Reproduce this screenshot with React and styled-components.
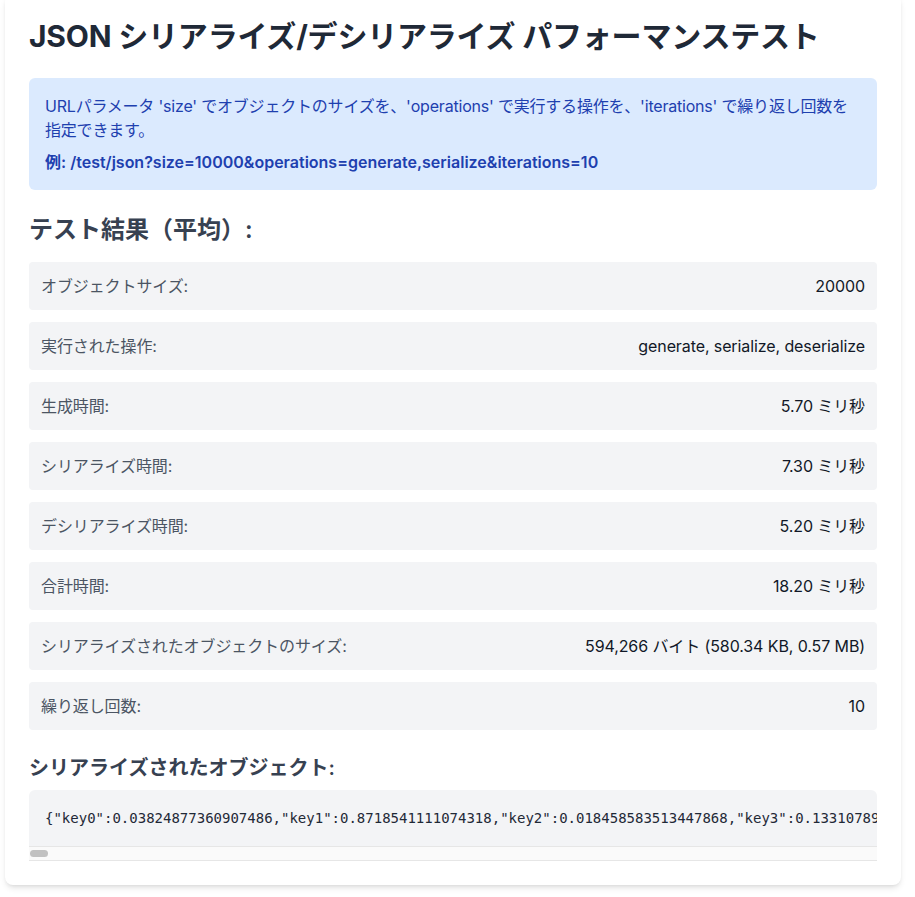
import React from "react";
import styled, { createGlobalStyle } from "styled-components";

const GlobalStyle = createGlobalStyle`
  html, body {
    margin: 0;
    padding: 0;
    background: #ffffff;
  }
  body {
    font-family: Inter, "Noto Sans CJK JP", sans-serif;
    color: #111827;
    line-height: 1.5;
  }
`;

const Page = styled.div`
  width: 915px;
  height: 897px;
  overflow: hidden;
  padding: 0 14px 0 5px;
  box-sizing: border-box;
`;

const Card = styled.div`
  max-width: 896px;
  margin-top: -6px;
  padding: 24px;
  box-sizing: border-box;
  background: #fff;
  border-radius: 8px;
  box-shadow: 0 4px 6px -1px rgba(0, 0, 0, 0.1), 0 2px 4px -2px rgba(0, 0, 0, 0.1);
`;

const Title = styled.h1`
  margin: 0 0 24px;
  font-size: 30px;
  line-height: 36px;
  font-weight: 700;
  letter-spacing: -0.2px;
  color: #1f2937;
`;

const InfoBox = styled.div`
  background: #dbeafe;
  color: #1e40af;
  border-radius: 6px;
  padding: 16px;
  margin-bottom: 24px;
`;

const InfoText = styled.p`
  margin: 0;
  font-size: 16px;
  line-height: 24px;
  letter-spacing: ${(p) => (p.$bold ? "0" : "-0.2px")};
  font-weight: ${(p) => (p.$bold ? 600 : 400)};
  margin-top: ${(p) => (p.$bold ? "8px" : "0")};
`;

const SectionTitle = styled.h2`
  margin: ${(p) => (p.$small ? "24px 0 8px" : "0 0 16px")};
  font-size: ${(p) => (p.$small ? "20px" : "24px")};
  line-height: ${(p) => (p.$small ? "28px" : "32px")};
  font-weight: 600;
  color: #374151;
`;

const ResultList = styled.div`
  display: flex;
  flex-direction: column;
  gap: 12px;
`;

const Row = styled.div`
  display: flex;
  justify-content: space-between;
  align-items: center;
  background: #f3f4f6;
  border-radius: 4px;
  padding: 12px;
  font-size: 16px;
  line-height: 24px;
  letter-spacing: -0.1px;
`;

const Label = styled.span`
  color: #4b5563;
`;

const Value = styled.span`
  color: #111827;
`;

const CodeBox = styled.div`
  border-radius: 6px 6px 0 0;
  overflow: hidden;
  background: #f3f4f6;
`;

const Code = styled.pre`
  margin: 0;
  padding: 16px;
  overflow: hidden;
  white-space: pre;
  font-family: "DejaVu Sans Mono", monospace;
  font-size: 14px;
  line-height: 24px;
  color: #1f2937;
`;

const ScrollTrack = styled.div`
  height: 13px;
  background: #fafafa;
  border-top: 1px solid #e6e6e6;
  border-bottom: 1px solid #e6e6e6;
  display: flex;
  align-items: center;
  padding-left: 1px;
`;

const ScrollThumb = styled.div`
  width: 18px;
  height: 7px;
  border-radius: 4px;
  background: #c1c1c1;
`;

const results = [
  ["オブジェクトサイズ:", "20000"],
  ["実行された操作:", "generate, serialize, deserialize"],
  ["生成時間:", "5.70 ミリ秒"],
  ["シリアライズ時間:", "7.30 ミリ秒"],
  ["デシリアライズ時間:", "5.20 ミリ秒"],
  ["合計時間:", "18.20 ミリ秒"],
  ["シリアライズされたオブジェクトのサイズ:", "594,266 バイト (580.34 KB, 0.57 MB)"],
  ["繰り返し回数:", "10"],
];

function buildJson() {
  const head =
    '{"key0":0.03824877360907486,"key1":0.8718541111074318,"key2":0.018458583513447868,"key3":0.13310789';
  let seed = 12345;
  const parts = [];
  for (let i = 4; i < 60; i++) {
    seed = (seed * 16807) % 2147483647;
    parts.push(`"key${i}":0.${String(seed).padStart(10, "0")}${seed % 997}`);
  }
  return head + "4412," + parts.join(",") + "}";
}

const json = buildJson();

export default function App() {
  return (
    <>
      <GlobalStyle />
      <Page>
        <Card>
          <Title>JSON シリアライズ/デシリアライズ パフォーマンステスト</Title>
          <InfoBox>
            <InfoText>
              URLパラメータ 'size' でオブジェクトのサイズを、'operations' で実行する操作を、'iterations' で繰り返し回数を指定できます。
            </InfoText>
            <InfoText $bold>
              例: /test/json?size=10000&amp;operations=generate,serialize&amp;iterations=10
            </InfoText>
          </InfoBox>
          <SectionTitle>テスト結果（平均）:</SectionTitle>
          <ResultList>
            {results.map(([k, v]) => (
              <Row key={k}>
                <Label>{k}</Label>
                <Value>{v}</Value>
              </Row>
            ))}
          </ResultList>
          <SectionTitle $small>シリアライズされたオブジェクト:</SectionTitle>
          <CodeBox>
            <Code>{json}</Code>
            <ScrollTrack>
              <ScrollThumb />
            </ScrollTrack>
          </CodeBox>
        </Card>
      </Page>
    </>
  );
}
